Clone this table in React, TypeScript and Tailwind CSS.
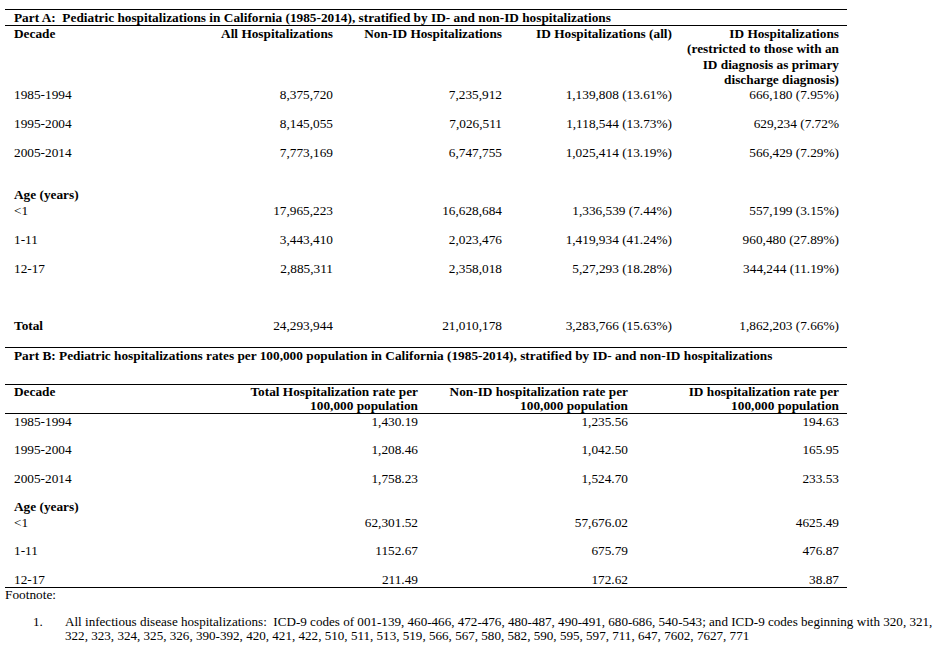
const partA = [
  { label: '1985-1994', all: '8,375,720', nonId: '7,235,912', id: '1,139,808 (13.61%)', primary: '666,180 (7.95%)' },
  { label: '1995-2004', all: '8,145,055', nonId: '7,026,511', id: '1,118,544 (13.73%)', primary: '629,234 (7.72%' },
  { label: '2005-2014', all: '7,773,169', nonId: '6,747,755', id: '1,025,414 (13.19%)', primary: '566,429 (7.29%)' },
]

const partAAge = [
  { label: '<1', all: '17,965,223', nonId: '16,628,684', id: '1,336,539 (7.44%)', primary: '557,199 (3.15%)' },
  { label: '1-11', all: '3,443,410', nonId: '2,023,476', id: '1,419,934 (41.24%)', primary: '960,480 (27.89%)' },
  { label: '12-17', all: '2,885,311', nonId: '2,358,018', id: '5,27,293 (18.28%)', primary: '344,244 (11.19%)' },
]

const partB = [
  { label: '1985-1994', total: '1,430.19', nonId: '1,235.56', id: '194.63' },
  { label: '1995-2004', total: '1,208.46', nonId: '1,042.50', id: '165.95' },
  { label: '2005-2014', total: '1,758.23', nonId: '1,524.70', id: '233.53' },
]

const partBAge = [
  { label: '<1', total: '62,301.52', nonId: '57,676.02', id: '4625.49' },
  { label: '1-11', total: '1152.67', nonId: '675.79', id: '476.87' },
  { label: '12-17', total: '211.49', nonId: '172.62', id: '38.87' },
]

const gridA = 'grid grid-cols-[165px_171px_169px_170px_167px]'
const gridB = 'grid grid-cols-[195px_226px_210px_211px]'

type RowA = { label: string; all: string; nonId: string; id: string; primary: string }
type RowB = { label: string; total: string; nonId: string; id: string }

function DataRowA({ row, bold }: { row: RowA; bold?: boolean }) {
  return (
    <div className={`${gridA} h-[28.75px] leading-[15.3px]`}>
      <div className={`pl-[9px] ${bold ? 'font-bold' : ''}`}>{row.label}</div>
      <div className="pr-2 text-right">{row.all}</div>
      <div className="pr-2 text-right">{row.nonId}</div>
      <div className="pr-2 text-right">{row.id}</div>
      <div className="pr-2 text-right">{row.primary}</div>
    </div>
  )
}

function DataRowB({ row, height = 'h-[28.5px] leading-[15.3px]' }: { row: RowB; height?: string }) {
  return (
    <div className={`${gridB} ${height}`}>
      <div className="pl-[9px]">{row.label}</div>
      <div className="pr-2 text-right">{row.total}</div>
      <div className="pr-2 text-right">{row.nonId}</div>
      <div className="pr-2 text-right">{row.id}</div>
    </div>
  )
}

export default function App() {
  return (
    <div className="w-[947px] min-h-[658px] bg-white text-black text-[13.3px] font-['Liberation_Serif','Times_New_Roman',serif] pt-[9px] pl-[5px]">
      {/* Part A */}
      <div className="w-[842px] border-t border-b border-black">
        <div className="h-[16px] leading-[15px] pl-[9px] font-bold whitespace-pre border-b border-black">
          {'Part A:  Pediatric hospitalizations in California (1985-2014), stratified by ID- and non-ID hospitalizations'}
        </div>
        <div className={`${gridA} h-[61.2px] leading-[15.3px] font-bold`}>
          <div className="pl-[9px]">Decade</div>
          <div className="pr-2 text-right">All Hospitalizations</div>
          <div className="pr-2 text-right">Non-ID Hospitalizations</div>
          <div className="pr-2 text-right">ID Hospitalizations (all)</div>
          <div className="pr-2 text-right">
            ID Hospitalizations
            <br />
            (restricted to those with an
            <br />
            ID diagnosis as primary
            <br />
            discharge diagnosis)
          </div>
        </div>
        {partA.map((r) => (
          <DataRowA key={r.label} row={r} />
        ))}
        <div className="h-[14px]" />
        <div className="h-[15.75px] leading-[15.3px] pl-[9px] font-bold">Age (years)</div>
        {partAAge.map((r) => (
          <DataRowA key={r.label} row={r} />
        ))}
        <div className="h-[28.75px]" />
        <DataRowA
          row={{ label: 'Total', all: '24,293,944', nonId: '21,010,178', id: '3,283,766 (15.63%)', primary: '1,862,203 (7.66%)' }}
          bold
        />
      </div>

      {/* Part B */}
      <div className="w-[842px] border-b border-black">
        <div className="h-[37px] leading-[15.3px] pl-[9px] font-bold border-b border-black">
          Part B: Pediatric hospitalizations rates per 100,000 population in California (1985-2014), stratified by ID- and non-ID hospitalizations
        </div>
        <div className={`${gridB} h-[29px] leading-[14px] font-bold border-b border-black`}>
          <div className="pl-[9px]">Decade</div>
          <div className="pr-2 text-right">
            Total Hospitalization rate per
            <br />
            100,000 population
          </div>
          <div className="pr-2 text-right">
            Non-ID hospitalization rate per
            <br />
            100,000 population
          </div>
          <div className="pr-2 text-right">
            ID hospitalization rate per
            <br />
            100,000 population
          </div>
        </div>
        {partB.map((r) => (
          <DataRowB key={r.label} row={r} />
        ))}
        <div className="h-[15.5px] leading-[15.3px] pl-[9px] font-bold">Age (years)</div>
        <DataRowB row={partBAge[0]} />
        <DataRowB row={partBAge[1]} />
        <DataRowB row={partBAge[2]} height="h-[15px] leading-[14px] pt-px" />
      </div>

      {/* Footnote */}
      <div className="leading-[12px] h-[12px] pt-px">Footnote:</div>
      <div className="flex mt-[15px] leading-[14.5px] text-[13.1px]">
        <span className="w-[60px] shrink-0 pl-[28px]">1.</span>
        <span className="whitespace-pre">
          {'All infectious disease hospitalizations:  ICD-9 codes of 001-139, 460-466, 472-476, 480-487, 490-491, 680-686, 540-543; and ICD-9 codes beginning with 320, 321,'}
          <br />
          {'322, 323, 324, 325, 326, 390-392, 420, 421, 422, 510, 511, 513, 519, 566, 567, 580, 582, 590, 595, 597, 711, 647, 7602, 7627, 771'}
        </span>
      </div>
    </div>
  )
}
